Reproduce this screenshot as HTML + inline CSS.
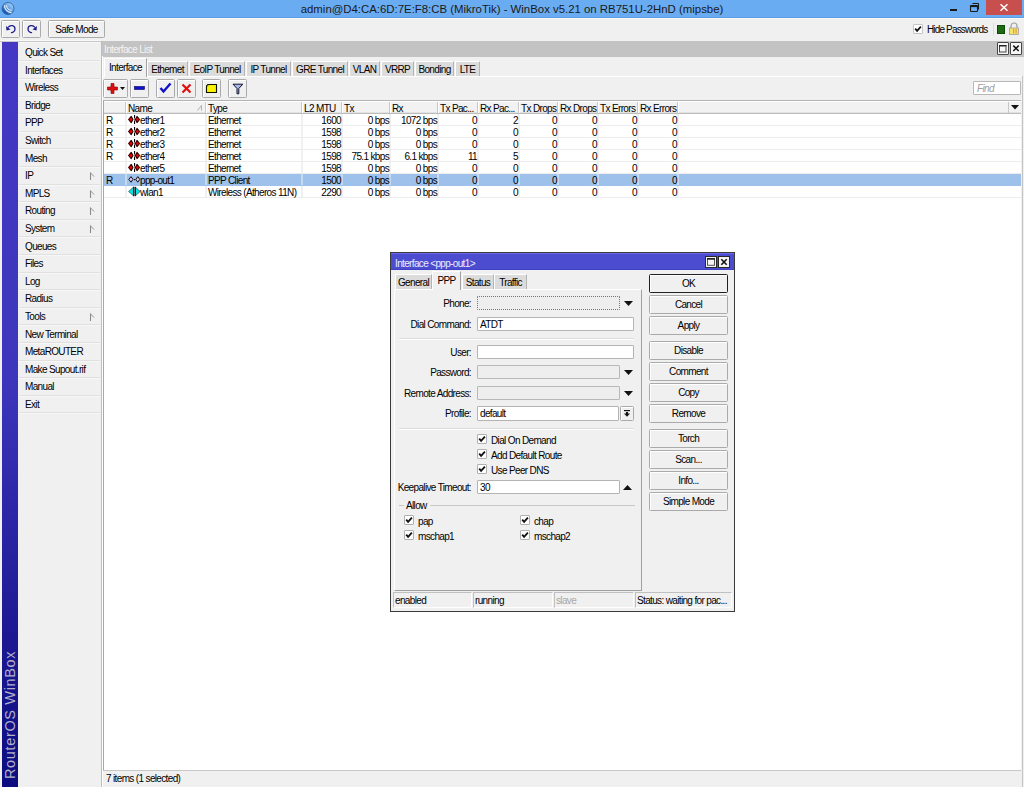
<!DOCTYPE html><html><head><meta charset="utf-8"><style>
*{margin:0;padding:0;box-sizing:border-box}
html,body{width:1024px;height:787px;overflow:hidden;background:#f0f0f0;position:relative;font-family:"Liberation Sans",sans-serif}
.t{position:absolute;font-size:10px;line-height:12px;letter-spacing:-0.65px;color:#000;white-space:pre;padding-top:1px}
.tr{position:absolute;font-size:10px;line-height:12px;letter-spacing:-0.65px;color:#000;white-space:pre;padding-top:1px;text-align:right}
.tc{position:absolute;font-size:10px;line-height:12px;letter-spacing:-0.65px;color:#000;white-space:pre;padding-top:1px;text-align:center}
.btn{position:absolute;border:1px solid #aaaaaa;border-radius:1.5px;background:#f0f0f0;box-shadow:inset 1px 1px 0 #fff}
.inp{position:absolute;border:1px solid #b4b4b4;background:#fff;border-radius:1px}
.cb{position:absolute;width:10px;height:10px;border:1px solid #b0b0b0;background:#fff;border-radius:1px}
</style></head><body>
<div style="position:absolute;left:0px;top:0px;width:1024px;height:17px;background:#6aacf1"></div>
<div style="position:absolute;left:0px;top:17px;width:1024px;height:1px;background:#5b9de6"></div>
<svg style="position:absolute;left:0px;top:0px" width="17" height="17" viewBox="0 0 17 17"><defs><linearGradient id="ig" x1="0.8" y1="0.1" x2="0.2" y2="0.9"><stop offset="0" stop-color="#a8d0f8"/><stop offset="0.5" stop-color="#5a9ae0"/><stop offset="1" stop-color="#0c4aa8"/></linearGradient></defs><circle cx="8" cy="8.5" r="6" fill="url(#ig)" stroke="#2a5a9a" stroke-width="0.8"/><path d="M4.6 5.2 A7 7 0 0 0 11.5 12.6" stroke="#f4f8ff" stroke-width="1.1" fill="none"/><path d="M6.6 5.4 A5.2 5.2 0 0 0 11.6 10.3" stroke="#f4f8ff" stroke-width="1" fill="none"/></svg>
<div style="position:absolute;left:0;top:0;width:1024px;height:18px;text-align:center;font-size:11.4px;line-height:18px;color:#1a1a1a;letter-spacing:0px;white-space:pre">admin@D4:CA:6D:7E:F8:CB (MikroTik) - WinBox v5.21 on RB751U-2HnD (mipsbe)</div>
<div style="position:absolute;left:950px;top:9px;width:7px;height:2px;background:#1a1a1a"></div>
<svg style="position:absolute;left:969px;top:2px" width="12" height="11" viewBox="0 0 12 11"><rect x="1.5" y="3.5" width="7" height="6" rx="0.8" fill="none" stroke="#1a1a1a" stroke-width="1.1"/><rect x="1.5" y="3.5" width="7" height="1.6" fill="#1a1a1a"/><path d="M3.5 1.5 H9.5 V7.5" fill="none" stroke="#1a1a1a" stroke-width="1"/></svg>
<div style="position:absolute;left:986px;top:0px;width:36px;height:15px;background:#c7504f"></div>
<svg style="position:absolute;left:1000px;top:4px" width="8" height="7" viewBox="0 0 8 7"><path d="M0.5 0.3 L7.5 6.7 M7.5 0.3 L0.5 6.7" stroke="#fff" stroke-width="1.5"/></svg>
<div style="position:absolute;left:0px;top:18px;width:1024px;height:1px;background:#faf7f2"></div>
<div style="position:absolute;left:0px;top:40px;width:101px;height:1px;background:#f8f8f8"></div>
<div style="position:absolute;left:0px;top:41px;width:101px;height:1px;background:#c8c8c8"></div>
<div class="btn" style="left:1px;top:20px;width:19px;height:18px"></div>
<svg style="position:absolute;left:5px;top:24px" width="12" height="10" viewBox="0 0 12 10"><path d="M3 3.5 C5 0.5 10 1 10 5 C10 8 7 9 6 8.5" fill="none" stroke="#1c1c8c" stroke-width="1.3"/><path d="M1 2 L1.5 6.5 L5.5 5.5 Z" fill="#1c1c8c"/></svg>
<div class="btn" style="left:22px;top:20px;width:19px;height:18px"></div>
<svg style="position:absolute;left:26px;top:24px" width="12" height="10" viewBox="0 0 12 10"><path d="M9 3.5 C7 0.5 2 1 2 5 C2 8 5 9 6 8.5" fill="none" stroke="#1c1c8c" stroke-width="1.3"/><path d="M11 2 L10.5 6.5 L6.5 5.5 Z" fill="#1c1c8c"/></svg>
<div class="btn" style="left:48px;top:20px;width:57px;height:18px"></div>
<div class="tc" style="left:48px;top:23px;width:57px;">Safe Mode</div>
<div class="cb" style="left:913px;top:24px;width:10px;height:10px;border-color:#c4c4c4"></div>
<svg style="position:absolute;left:913px;top:24px" width="10" height="10" viewBox="0 0 10 10"><path d="M2.2 4.6 L4.1 6.9 L7.9 2.6" fill="none" stroke="#111" stroke-width="1.7"/></svg>
<div class="t" style="left:927px;top:23px;letter-spacing:-0.85px">Hide Passwords</div>
<div style="position:absolute;left:993px;top:23px;width:1px;height:12px;background:#dcdcdc"></div>
<div style="position:absolute;left:997px;top:25px;width:8px;height:9px;background:#1e6a12;border:1px solid #0d4a08"></div>
<svg style="position:absolute;left:1008px;top:22px" width="12" height="13" viewBox="0 0 12 13"><path d="M3 6 V4 A3 3 0 0 1 9 4 V6" fill="none" stroke="#a0a0a0" stroke-width="1.2"/><rect x="1.5" y="6" width="9" height="6.5" fill="#f6e36a" stroke="#a0a0a0" stroke-width="0.8"/><rect x="5" y="7" width="1.2" height="4.5" fill="#e0a040"/><rect x="7.5" y="7" width="1.2" height="4.5" fill="#e0a040"/></svg>
<div style="position:absolute;left:2px;top:42px;width:16px;height:745px;background:linear-gradient(#4438c4,#3d36bc 45%,#1c1892 80%,#0c0c80)"></div>
<div style="position:absolute;left:2px;top:787px;width:170px;height:16px;transform-origin:0 0;transform:rotate(-90deg);font-size:14.5px;line-height:16px;color:#b0b0c8;padding-left:8px;letter-spacing:0.65px;white-space:pre">RouterOS WinBox</div>
<div style="position:absolute;left:19px;top:42px;width:82px;height:745px;background:#f0f0f0"></div>
<div style="position:absolute;left:19px;top:42px;width:81px;height:1px;background:#f8f8f8"></div>
<div style="position:absolute;left:101px;top:41px;width:1px;height:746px;background:#bdbdbd"></div>
<div class="t" style="left:25px;top:46px;">Quick Set</div>
<div style="position:absolute;left:19px;top:60px;width:81px;height:1px;background:#e0e0e0"></div>
<div style="position:absolute;left:19px;top:61px;width:81px;height:1px;background:#f7f7f7"></div>
<div class="t" style="left:25px;top:64px;">Interfaces</div>
<div style="position:absolute;left:19px;top:78px;width:81px;height:1px;background:#e0e0e0"></div>
<div style="position:absolute;left:19px;top:79px;width:81px;height:1px;background:#f7f7f7"></div>
<div class="t" style="left:25px;top:81px;">Wireless</div>
<div style="position:absolute;left:19px;top:96px;width:81px;height:1px;background:#e0e0e0"></div>
<div style="position:absolute;left:19px;top:97px;width:81px;height:1px;background:#f7f7f7"></div>
<div class="t" style="left:25px;top:99px;">Bridge</div>
<div style="position:absolute;left:19px;top:113px;width:81px;height:1px;background:#e0e0e0"></div>
<div style="position:absolute;left:19px;top:114px;width:81px;height:1px;background:#f7f7f7"></div>
<div class="t" style="left:25px;top:116px;">PPP</div>
<div style="position:absolute;left:19px;top:131px;width:81px;height:1px;background:#e0e0e0"></div>
<div style="position:absolute;left:19px;top:132px;width:81px;height:1px;background:#f7f7f7"></div>
<div class="t" style="left:25px;top:134px;">Switch</div>
<div style="position:absolute;left:19px;top:148px;width:81px;height:1px;background:#e0e0e0"></div>
<div style="position:absolute;left:19px;top:149px;width:81px;height:1px;background:#f7f7f7"></div>
<div class="t" style="left:25px;top:152px;">Mesh</div>
<div style="position:absolute;left:19px;top:166px;width:81px;height:1px;background:#e0e0e0"></div>
<div style="position:absolute;left:19px;top:167px;width:81px;height:1px;background:#f7f7f7"></div>
<div class="t" style="left:25px;top:169px;">IP</div>
<div style="position:absolute;left:19px;top:184px;width:81px;height:1px;background:#e0e0e0"></div>
<div style="position:absolute;left:19px;top:185px;width:81px;height:1px;background:#f7f7f7"></div>
<svg style="position:absolute;left:89px;top:172px" width="6" height="9" viewBox="0 0 6 9"><path d="M1.5 0.5 V8" stroke="#8c8c8c" stroke-width="1.1" fill="none"/><path d="M1.5 0.8 L5 4.5" stroke="#8c8c8c" stroke-width="0.9" fill="none"/></svg>
<div class="t" style="left:25px;top:187px;">MPLS</div>
<div style="position:absolute;left:19px;top:201px;width:81px;height:1px;background:#e0e0e0"></div>
<div style="position:absolute;left:19px;top:202px;width:81px;height:1px;background:#f7f7f7"></div>
<svg style="position:absolute;left:89px;top:190px" width="6" height="9" viewBox="0 0 6 9"><path d="M1.5 0.5 V8" stroke="#8c8c8c" stroke-width="1.1" fill="none"/><path d="M1.5 0.8 L5 4.5" stroke="#8c8c8c" stroke-width="0.9" fill="none"/></svg>
<div class="t" style="left:25px;top:204px;">Routing</div>
<div style="position:absolute;left:19px;top:219px;width:81px;height:1px;background:#e0e0e0"></div>
<div style="position:absolute;left:19px;top:220px;width:81px;height:1px;background:#f7f7f7"></div>
<svg style="position:absolute;left:89px;top:207px" width="6" height="9" viewBox="0 0 6 9"><path d="M1.5 0.5 V8" stroke="#8c8c8c" stroke-width="1.1" fill="none"/><path d="M1.5 0.8 L5 4.5" stroke="#8c8c8c" stroke-width="0.9" fill="none"/></svg>
<div class="t" style="left:25px;top:222px;">System</div>
<div style="position:absolute;left:19px;top:236px;width:81px;height:1px;background:#e0e0e0"></div>
<div style="position:absolute;left:19px;top:237px;width:81px;height:1px;background:#f7f7f7"></div>
<svg style="position:absolute;left:89px;top:225px" width="6" height="9" viewBox="0 0 6 9"><path d="M1.5 0.5 V8" stroke="#8c8c8c" stroke-width="1.1" fill="none"/><path d="M1.5 0.8 L5 4.5" stroke="#8c8c8c" stroke-width="0.9" fill="none"/></svg>
<div class="t" style="left:25px;top:240px;">Queues</div>
<div style="position:absolute;left:19px;top:254px;width:81px;height:1px;background:#e0e0e0"></div>
<div style="position:absolute;left:19px;top:255px;width:81px;height:1px;background:#f7f7f7"></div>
<div class="t" style="left:25px;top:257px;">Files</div>
<div style="position:absolute;left:19px;top:272px;width:81px;height:1px;background:#e0e0e0"></div>
<div style="position:absolute;left:19px;top:273px;width:81px;height:1px;background:#f7f7f7"></div>
<div class="t" style="left:25px;top:275px;">Log</div>
<div style="position:absolute;left:19px;top:289px;width:81px;height:1px;background:#e0e0e0"></div>
<div style="position:absolute;left:19px;top:290px;width:81px;height:1px;background:#f7f7f7"></div>
<div class="t" style="left:25px;top:292px;">Radius</div>
<div style="position:absolute;left:19px;top:307px;width:81px;height:1px;background:#e0e0e0"></div>
<div style="position:absolute;left:19px;top:308px;width:81px;height:1px;background:#f7f7f7"></div>
<div class="t" style="left:25px;top:310px;">Tools</div>
<div style="position:absolute;left:19px;top:324px;width:81px;height:1px;background:#e0e0e0"></div>
<div style="position:absolute;left:19px;top:325px;width:81px;height:1px;background:#f7f7f7"></div>
<svg style="position:absolute;left:89px;top:313px" width="6" height="9" viewBox="0 0 6 9"><path d="M1.5 0.5 V8" stroke="#8c8c8c" stroke-width="1.1" fill="none"/><path d="M1.5 0.8 L5 4.5" stroke="#8c8c8c" stroke-width="0.9" fill="none"/></svg>
<div class="t" style="left:25px;top:328px;">New Terminal</div>
<div style="position:absolute;left:19px;top:342px;width:81px;height:1px;background:#e0e0e0"></div>
<div style="position:absolute;left:19px;top:343px;width:81px;height:1px;background:#f7f7f7"></div>
<div class="t" style="left:25px;top:345px;">MetaROUTER</div>
<div style="position:absolute;left:19px;top:360px;width:81px;height:1px;background:#e0e0e0"></div>
<div style="position:absolute;left:19px;top:361px;width:81px;height:1px;background:#f7f7f7"></div>
<div class="t" style="left:25px;top:363px;">Make Supout.rif</div>
<div style="position:absolute;left:19px;top:377px;width:81px;height:1px;background:#e0e0e0"></div>
<div style="position:absolute;left:19px;top:378px;width:81px;height:1px;background:#f7f7f7"></div>
<div class="t" style="left:25px;top:380px;">Manual</div>
<div style="position:absolute;left:19px;top:395px;width:81px;height:1px;background:#e0e0e0"></div>
<div style="position:absolute;left:19px;top:396px;width:81px;height:1px;background:#f7f7f7"></div>
<div class="t" style="left:25px;top:398px;">Exit</div>
<div style="position:absolute;left:19px;top:412px;width:81px;height:1px;background:#e0e0e0"></div>
<div style="position:absolute;left:19px;top:413px;width:81px;height:1px;background:#f7f7f7"></div>
<div style="position:absolute;left:102px;top:41px;width:922px;height:16px;background:#c3c3c3"></div>
<div class="t" style="left:104px;top:43px;color:#f4f4f4;">Interface List</div>
<div style="position:absolute;left:997px;top:42px;width:12px;height:13px;border:1px solid #454545;border-radius:1px;background:#f6f6f6"></div>
<svg style="position:absolute;left:997px;top:42px" width="12" height="13" viewBox="0 0 12 13"><rect x="2.5" y="3.5" width="6.5" height="6.5" fill="none" stroke="#444" stroke-width="1"/><rect x="2" y="3" width="7.5" height="1.5" fill="#222"/><rect x="8.6" y="4" width="1" height="6" fill="#999"/></svg>
<div style="position:absolute;left:1010px;top:42px;width:12px;height:13px;border:1px solid #454545;border-radius:1px;background:#f6f6f6"></div>
<svg style="position:absolute;left:1010px;top:42px" width="12" height="13" viewBox="0 0 12 13"><path d="M3.3 3.6 L8.7 9 M8.7 3.6 L3.3 9" stroke="#111" stroke-width="1.5"/></svg>
<div style="position:absolute;left:102px;top:56px;width:1px;height:731px;background:#ffffff"></div>
<div style="position:absolute;left:103px;top:76px;width:918px;height:1px;background:#ffffff"></div>
<div style="position:absolute;left:1022px;top:76px;width:1px;height:711px;background:#c4c4c4"></div>
<div style="position:absolute;left:104px;top:58px;width:43px;height:19px;background:#f0f0f0;border-left:1px solid #fff;border-top:1px solid #fff;border-right:1px solid #a0a0a0"></div>
<div class="tc" style="left:104px;top:61px;width:43px;">Interface</div>
<div style="position:absolute;left:147px;top:61px;width:41px;height:15px;background:#dcdcdc;border-left:1px solid #fff;border-top:1px solid #fff;border-right:1px solid #b4b4b4"></div>
<div class="tc" style="left:147px;top:63px;width:41px;">Ethemet</div>
<div style="position:absolute;left:189px;top:61px;width:56px;height:15px;background:#dcdcdc;border-left:1px solid #fff;border-top:1px solid #fff;border-right:1px solid #b4b4b4"></div>
<div class="tc" style="left:189px;top:63px;width:56px;">EoIP Tunnel</div>
<div style="position:absolute;left:246px;top:61px;width:45px;height:15px;background:#dcdcdc;border-left:1px solid #fff;border-top:1px solid #fff;border-right:1px solid #b4b4b4"></div>
<div class="tc" style="left:246px;top:63px;width:45px;">IP Tunnel</div>
<div style="position:absolute;left:292px;top:61px;width:56px;height:15px;background:#dcdcdc;border-left:1px solid #fff;border-top:1px solid #fff;border-right:1px solid #b4b4b4"></div>
<div class="tc" style="left:292px;top:63px;width:56px;">GRE Tunnel</div>
<div style="position:absolute;left:349px;top:61px;width:31px;height:15px;background:#dcdcdc;border-left:1px solid #fff;border-top:1px solid #fff;border-right:1px solid #b4b4b4"></div>
<div class="tc" style="left:349px;top:63px;width:31px;">VLAN</div>
<div style="position:absolute;left:381px;top:61px;width:33px;height:15px;background:#dcdcdc;border-left:1px solid #fff;border-top:1px solid #fff;border-right:1px solid #b4b4b4"></div>
<div class="tc" style="left:381px;top:63px;width:33px;">VRRP</div>
<div style="position:absolute;left:415px;top:61px;width:39px;height:15px;background:#dcdcdc;border-left:1px solid #fff;border-top:1px solid #fff;border-right:1px solid #b4b4b4"></div>
<div class="tc" style="left:415px;top:63px;width:39px;">Bonding</div>
<div style="position:absolute;left:455px;top:61px;width:25px;height:15px;background:#dcdcdc;border-left:1px solid #fff;border-top:1px solid #fff;border-right:1px solid #b4b4b4"></div>
<div class="tc" style="left:455px;top:63px;width:25px;">LTE</div>
<div class="btn" style="left:103px;top:79px;width:25px;height:19px"></div>
<div class="btn" style="left:130px;top:79px;width:19px;height:19px"></div>
<div class="btn" style="left:156px;top:79px;width:19px;height:19px"></div>
<div class="btn" style="left:177px;top:79px;width:19px;height:19px"></div>
<div class="btn" style="left:202px;top:79px;width:19px;height:19px"></div>
<div class="btn" style="left:228px;top:79px;width:19px;height:19px"></div>
<svg style="position:absolute;left:107px;top:82px" width="20" height="13" viewBox="0 0 20 13"><path d="M4 1.5 H7 V5 H10.5 V8 H7 V11.5 H4 V8 H0.5 V5 H4 Z" fill="#e01010" stroke="#800000" stroke-width="0.6"/><path d="M13 5 H18 L15.5 8 Z" fill="#111"/></svg>
<svg style="position:absolute;left:134px;top:83px" width="12" height="10" viewBox="0 0 12 10"><rect x="0.5" y="3.5" width="10" height="3" fill="#1010d0" stroke="#000060" stroke-width="0.6"/></svg>
<svg style="position:absolute;left:159px;top:82px" width="13" height="12" viewBox="0 0 13 12"><path d="M1.5 6 L4.5 9.5 L11.5 1.5" fill="none" stroke="#1010c8" stroke-width="2.4"/></svg>
<svg style="position:absolute;left:181px;top:83px" width="11" height="11" viewBox="0 0 11 11"><path d="M1.5 1.5 L9.5 9.5 M9.5 1.5 L1.5 9.5" stroke="#e01010" stroke-width="2.2"/></svg>
<svg style="position:absolute;left:205px;top:83px" width="13" height="11" viewBox="0 0 13 11"><path d="M1.5 3 L3 1.5 H11.5 V9.5 H1.5 Z" fill="#f8f400" stroke="#101000" stroke-width="1.1" stroke-linejoin="round"/><path d="M1.6 3 H3.2 V1.5" fill="none" stroke="#777" stroke-width="0.6"/></svg>
<svg style="position:absolute;left:232px;top:83px" width="12" height="12" viewBox="0 0 12 12"><path d="M1 1.2 H10.8 L6.8 5.5 V10.8 H5 V5.5 Z" fill="#a8b8e8" stroke="#101028" stroke-width="1" stroke-linejoin="round"/></svg>
<div class="inp" style="left:973px;top:81px;width:48px;height:14px;border-color:#b8b8b8"></div>
<div class="t" style="left:977px;top:82px;color:#a0a0a0;font-style:italic">Find</div>
<div style="position:absolute;left:103px;top:100px;width:918px;height:670px;background:#fff"></div>
<div style="position:absolute;left:103px;top:100px;width:1px;height:670px;background:#a8a8a8"></div>
<div style="position:absolute;left:104px;top:100px;width:917px;height:1px;background:#b4b4b4"></div>
<div style="position:absolute;left:104px;top:101px;width:917px;height:1px;background:#ffffff"></div>
<div style="position:absolute;left:104px;top:102px;width:917px;height:11px;background:#f2f2f2"></div>
<div style="position:absolute;left:104px;top:112px;width:917px;height:1px;background:#e2e2e2"></div>
<div style="position:absolute;left:104px;top:113px;width:917px;height:1px;background:#bcbcbc"></div>
<div style="position:absolute;left:125px;top:102px;width:1px;height:11px;background:#c8c8c8"></div>
<div style="position:absolute;left:126px;top:102px;width:1px;height:11px;background:#ffffff"></div>
<div style="position:absolute;left:205px;top:102px;width:1px;height:11px;background:#c8c8c8"></div>
<div style="position:absolute;left:206px;top:102px;width:1px;height:11px;background:#ffffff"></div>
<div class="t" style="left:128px;top:102px;">Name</div>
<div style="position:absolute;left:301px;top:102px;width:1px;height:11px;background:#c8c8c8"></div>
<div style="position:absolute;left:302px;top:102px;width:1px;height:11px;background:#ffffff"></div>
<div class="t" style="left:208px;top:102px;">Type</div>
<div style="position:absolute;left:341px;top:102px;width:1px;height:11px;background:#c8c8c8"></div>
<div style="position:absolute;left:342px;top:102px;width:1px;height:11px;background:#ffffff"></div>
<div class="t" style="left:304px;top:102px;">L2 MTU</div>
<div style="position:absolute;left:389px;top:102px;width:1px;height:11px;background:#c8c8c8"></div>
<div style="position:absolute;left:390px;top:102px;width:1px;height:11px;background:#ffffff"></div>
<div class="t" style="left:344px;top:102px;">Tx</div>
<div style="position:absolute;left:437px;top:102px;width:1px;height:11px;background:#c8c8c8"></div>
<div style="position:absolute;left:438px;top:102px;width:1px;height:11px;background:#ffffff"></div>
<div class="t" style="left:392px;top:102px;">Rx</div>
<div style="position:absolute;left:477px;top:102px;width:1px;height:11px;background:#c8c8c8"></div>
<div style="position:absolute;left:478px;top:102px;width:1px;height:11px;background:#ffffff"></div>
<div class="t" style="left:440px;top:102px;">Tx Pac...</div>
<div style="position:absolute;left:518px;top:102px;width:1px;height:11px;background:#c8c8c8"></div>
<div style="position:absolute;left:519px;top:102px;width:1px;height:11px;background:#ffffff"></div>
<div class="t" style="left:480px;top:102px;">Rx Pac...</div>
<div style="position:absolute;left:557px;top:102px;width:1px;height:11px;background:#c8c8c8"></div>
<div style="position:absolute;left:558px;top:102px;width:1px;height:11px;background:#ffffff"></div>
<div class="t" style="left:521px;top:102px;">Tx Drops</div>
<div style="position:absolute;left:597px;top:102px;width:1px;height:11px;background:#c8c8c8"></div>
<div style="position:absolute;left:598px;top:102px;width:1px;height:11px;background:#ffffff"></div>
<div class="t" style="left:560px;top:102px;">Rx Drops</div>
<div style="position:absolute;left:637px;top:102px;width:1px;height:11px;background:#c8c8c8"></div>
<div style="position:absolute;left:638px;top:102px;width:1px;height:11px;background:#ffffff"></div>
<div class="t" style="left:600px;top:102px;">Tx Errors</div>
<div style="position:absolute;left:677px;top:102px;width:1px;height:11px;background:#c8c8c8"></div>
<div style="position:absolute;left:678px;top:102px;width:1px;height:11px;background:#ffffff"></div>
<div class="t" style="left:640px;top:102px;">Rx Errors</div>
<svg style="position:absolute;left:197px;top:105px" width="6" height="6" viewBox="0 0 6 6"><path d="M0.5 5.5 L4.5 0.5 M4.5 0.5 V5.5" fill="none" stroke="#a8a8a8" stroke-width="0.9"/></svg>
<div style="position:absolute;left:1008px;top:102px;width:1px;height:11px;background:#c8c8c8"></div>
<svg style="position:absolute;left:1011px;top:105px" width="8" height="5" viewBox="0 0 8 5"><path d="M0 0 H8 L4 4.6 Z" fill="#111"/></svg>
<div style="position:absolute;left:104px;top:125px;width:917px;height:1px;background:#ececec"></div>
<div style="position:absolute;left:125px;top:114px;width:2px;height:11px;background:#f0f0f0"></div>
<div style="position:absolute;left:205px;top:114px;width:2px;height:11px;background:#f0f0f0"></div>
<div style="position:absolute;left:301px;top:114px;width:2px;height:11px;background:#f0f0f0"></div>
<div style="position:absolute;left:341px;top:114px;width:2px;height:11px;background:#f0f0f0"></div>
<div style="position:absolute;left:389px;top:114px;width:2px;height:11px;background:#f0f0f0"></div>
<div style="position:absolute;left:437px;top:114px;width:2px;height:11px;background:#f0f0f0"></div>
<div style="position:absolute;left:477px;top:114px;width:2px;height:11px;background:#f0f0f0"></div>
<div style="position:absolute;left:518px;top:114px;width:2px;height:11px;background:#f0f0f0"></div>
<div style="position:absolute;left:557px;top:114px;width:2px;height:11px;background:#f0f0f0"></div>
<div style="position:absolute;left:597px;top:114px;width:2px;height:11px;background:#f0f0f0"></div>
<div style="position:absolute;left:637px;top:114px;width:2px;height:11px;background:#f0f0f0"></div>
<div style="position:absolute;left:677px;top:114px;width:2px;height:11px;background:#f0f0f0"></div>
<div class="t" style="left:106px;top:114px;">R</div>
<div class="t" style="left:140px;top:114px;">ether1</div>
<div class="t" style="left:208px;top:114px;">Ethernet</div>
<div class="tr" style="left:302px;top:114px;width:39px">1600</div>
<div class="tr" style="left:342px;top:114px;width:47px">0 bps</div>
<div class="tr" style="left:390px;top:114px;width:47px">1072 bps</div>
<div class="tr" style="left:438px;top:114px;width:39px">0</div>
<div class="tr" style="left:478px;top:114px;width:40px">2</div>
<div class="tr" style="left:519px;top:114px;width:38px">0</div>
<div class="tr" style="left:558px;top:114px;width:39px">0</div>
<div class="tr" style="left:598px;top:114px;width:39px">0</div>
<div class="tr" style="left:638px;top:114px;width:39px">0</div>
<svg style="position:absolute;left:128px;top:114px" width="13" height="11" viewBox="0 0 13 11"><path d="M0.6 5.5 L3.2 2.4 L5 5.5 L3.2 8.6 Z" fill="#f00000" stroke="#300000" stroke-width="1.1" stroke-linejoin="round"/><path d="M11.6 5.5 L9 2.4 L7.4 5.5 L9 8.6 Z" fill="#f00000" stroke="#300000" stroke-width="1.1" stroke-linejoin="round"/><rect x="6" y="1" width="1.1" height="3.5" fill="#000"/><rect x="6" y="6.5" width="1.1" height="3.5" fill="#000"/><rect x="6" y="5" width="1" height="1" fill="#888"/></svg>
<div style="position:absolute;left:104px;top:137px;width:917px;height:1px;background:#ececec"></div>
<div style="position:absolute;left:125px;top:126px;width:2px;height:11px;background:#f0f0f0"></div>
<div style="position:absolute;left:205px;top:126px;width:2px;height:11px;background:#f0f0f0"></div>
<div style="position:absolute;left:301px;top:126px;width:2px;height:11px;background:#f0f0f0"></div>
<div style="position:absolute;left:341px;top:126px;width:2px;height:11px;background:#f0f0f0"></div>
<div style="position:absolute;left:389px;top:126px;width:2px;height:11px;background:#f0f0f0"></div>
<div style="position:absolute;left:437px;top:126px;width:2px;height:11px;background:#f0f0f0"></div>
<div style="position:absolute;left:477px;top:126px;width:2px;height:11px;background:#f0f0f0"></div>
<div style="position:absolute;left:518px;top:126px;width:2px;height:11px;background:#f0f0f0"></div>
<div style="position:absolute;left:557px;top:126px;width:2px;height:11px;background:#f0f0f0"></div>
<div style="position:absolute;left:597px;top:126px;width:2px;height:11px;background:#f0f0f0"></div>
<div style="position:absolute;left:637px;top:126px;width:2px;height:11px;background:#f0f0f0"></div>
<div style="position:absolute;left:677px;top:126px;width:2px;height:11px;background:#f0f0f0"></div>
<div class="t" style="left:106px;top:126px;">R</div>
<div class="t" style="left:140px;top:126px;">ether2</div>
<div class="t" style="left:208px;top:126px;">Ethernet</div>
<div class="tr" style="left:302px;top:126px;width:39px">1598</div>
<div class="tr" style="left:342px;top:126px;width:47px">0 bps</div>
<div class="tr" style="left:390px;top:126px;width:47px">0 bps</div>
<div class="tr" style="left:438px;top:126px;width:39px">0</div>
<div class="tr" style="left:478px;top:126px;width:40px">0</div>
<div class="tr" style="left:519px;top:126px;width:38px">0</div>
<div class="tr" style="left:558px;top:126px;width:39px">0</div>
<div class="tr" style="left:598px;top:126px;width:39px">0</div>
<div class="tr" style="left:638px;top:126px;width:39px">0</div>
<svg style="position:absolute;left:128px;top:126px" width="13" height="11" viewBox="0 0 13 11"><path d="M0.6 5.5 L3.2 2.4 L5 5.5 L3.2 8.6 Z" fill="#f00000" stroke="#300000" stroke-width="1.1" stroke-linejoin="round"/><path d="M11.6 5.5 L9 2.4 L7.4 5.5 L9 8.6 Z" fill="#f00000" stroke="#300000" stroke-width="1.1" stroke-linejoin="round"/><rect x="6" y="1" width="1.1" height="3.5" fill="#000"/><rect x="6" y="6.5" width="1.1" height="3.5" fill="#000"/><rect x="6" y="5" width="1" height="1" fill="#888"/></svg>
<div style="position:absolute;left:104px;top:149px;width:917px;height:1px;background:#ececec"></div>
<div style="position:absolute;left:125px;top:138px;width:2px;height:11px;background:#f0f0f0"></div>
<div style="position:absolute;left:205px;top:138px;width:2px;height:11px;background:#f0f0f0"></div>
<div style="position:absolute;left:301px;top:138px;width:2px;height:11px;background:#f0f0f0"></div>
<div style="position:absolute;left:341px;top:138px;width:2px;height:11px;background:#f0f0f0"></div>
<div style="position:absolute;left:389px;top:138px;width:2px;height:11px;background:#f0f0f0"></div>
<div style="position:absolute;left:437px;top:138px;width:2px;height:11px;background:#f0f0f0"></div>
<div style="position:absolute;left:477px;top:138px;width:2px;height:11px;background:#f0f0f0"></div>
<div style="position:absolute;left:518px;top:138px;width:2px;height:11px;background:#f0f0f0"></div>
<div style="position:absolute;left:557px;top:138px;width:2px;height:11px;background:#f0f0f0"></div>
<div style="position:absolute;left:597px;top:138px;width:2px;height:11px;background:#f0f0f0"></div>
<div style="position:absolute;left:637px;top:138px;width:2px;height:11px;background:#f0f0f0"></div>
<div style="position:absolute;left:677px;top:138px;width:2px;height:11px;background:#f0f0f0"></div>
<div class="t" style="left:106px;top:138px;">R</div>
<div class="t" style="left:140px;top:138px;">ether3</div>
<div class="t" style="left:208px;top:138px;">Ethernet</div>
<div class="tr" style="left:302px;top:138px;width:39px">1598</div>
<div class="tr" style="left:342px;top:138px;width:47px">0 bps</div>
<div class="tr" style="left:390px;top:138px;width:47px">0 bps</div>
<div class="tr" style="left:438px;top:138px;width:39px">0</div>
<div class="tr" style="left:478px;top:138px;width:40px">0</div>
<div class="tr" style="left:519px;top:138px;width:38px">0</div>
<div class="tr" style="left:558px;top:138px;width:39px">0</div>
<div class="tr" style="left:598px;top:138px;width:39px">0</div>
<div class="tr" style="left:638px;top:138px;width:39px">0</div>
<svg style="position:absolute;left:128px;top:138px" width="13" height="11" viewBox="0 0 13 11"><path d="M0.6 5.5 L3.2 2.4 L5 5.5 L3.2 8.6 Z" fill="#f00000" stroke="#300000" stroke-width="1.1" stroke-linejoin="round"/><path d="M11.6 5.5 L9 2.4 L7.4 5.5 L9 8.6 Z" fill="#f00000" stroke="#300000" stroke-width="1.1" stroke-linejoin="round"/><rect x="6" y="1" width="1.1" height="3.5" fill="#000"/><rect x="6" y="6.5" width="1.1" height="3.5" fill="#000"/><rect x="6" y="5" width="1" height="1" fill="#888"/></svg>
<div style="position:absolute;left:104px;top:161px;width:917px;height:1px;background:#ececec"></div>
<div style="position:absolute;left:125px;top:150px;width:2px;height:11px;background:#f0f0f0"></div>
<div style="position:absolute;left:205px;top:150px;width:2px;height:11px;background:#f0f0f0"></div>
<div style="position:absolute;left:301px;top:150px;width:2px;height:11px;background:#f0f0f0"></div>
<div style="position:absolute;left:341px;top:150px;width:2px;height:11px;background:#f0f0f0"></div>
<div style="position:absolute;left:389px;top:150px;width:2px;height:11px;background:#f0f0f0"></div>
<div style="position:absolute;left:437px;top:150px;width:2px;height:11px;background:#f0f0f0"></div>
<div style="position:absolute;left:477px;top:150px;width:2px;height:11px;background:#f0f0f0"></div>
<div style="position:absolute;left:518px;top:150px;width:2px;height:11px;background:#f0f0f0"></div>
<div style="position:absolute;left:557px;top:150px;width:2px;height:11px;background:#f0f0f0"></div>
<div style="position:absolute;left:597px;top:150px;width:2px;height:11px;background:#f0f0f0"></div>
<div style="position:absolute;left:637px;top:150px;width:2px;height:11px;background:#f0f0f0"></div>
<div style="position:absolute;left:677px;top:150px;width:2px;height:11px;background:#f0f0f0"></div>
<div class="t" style="left:106px;top:150px;">R</div>
<div class="t" style="left:140px;top:150px;">ether4</div>
<div class="t" style="left:208px;top:150px;">Ethernet</div>
<div class="tr" style="left:302px;top:150px;width:39px">1598</div>
<div class="tr" style="left:342px;top:150px;width:47px">75.1 kbps</div>
<div class="tr" style="left:390px;top:150px;width:47px">6.1 kbps</div>
<div class="tr" style="left:438px;top:150px;width:39px">11</div>
<div class="tr" style="left:478px;top:150px;width:40px">5</div>
<div class="tr" style="left:519px;top:150px;width:38px">0</div>
<div class="tr" style="left:558px;top:150px;width:39px">0</div>
<div class="tr" style="left:598px;top:150px;width:39px">0</div>
<div class="tr" style="left:638px;top:150px;width:39px">0</div>
<svg style="position:absolute;left:128px;top:150px" width="13" height="11" viewBox="0 0 13 11"><path d="M0.6 5.5 L3.2 2.4 L5 5.5 L3.2 8.6 Z" fill="#f00000" stroke="#300000" stroke-width="1.1" stroke-linejoin="round"/><path d="M11.6 5.5 L9 2.4 L7.4 5.5 L9 8.6 Z" fill="#f00000" stroke="#300000" stroke-width="1.1" stroke-linejoin="round"/><rect x="6" y="1" width="1.1" height="3.5" fill="#000"/><rect x="6" y="6.5" width="1.1" height="3.5" fill="#000"/><rect x="6" y="5" width="1" height="1" fill="#888"/></svg>
<div style="position:absolute;left:104px;top:173px;width:917px;height:1px;background:#ececec"></div>
<div style="position:absolute;left:125px;top:162px;width:2px;height:11px;background:#f0f0f0"></div>
<div style="position:absolute;left:205px;top:162px;width:2px;height:11px;background:#f0f0f0"></div>
<div style="position:absolute;left:301px;top:162px;width:2px;height:11px;background:#f0f0f0"></div>
<div style="position:absolute;left:341px;top:162px;width:2px;height:11px;background:#f0f0f0"></div>
<div style="position:absolute;left:389px;top:162px;width:2px;height:11px;background:#f0f0f0"></div>
<div style="position:absolute;left:437px;top:162px;width:2px;height:11px;background:#f0f0f0"></div>
<div style="position:absolute;left:477px;top:162px;width:2px;height:11px;background:#f0f0f0"></div>
<div style="position:absolute;left:518px;top:162px;width:2px;height:11px;background:#f0f0f0"></div>
<div style="position:absolute;left:557px;top:162px;width:2px;height:11px;background:#f0f0f0"></div>
<div style="position:absolute;left:597px;top:162px;width:2px;height:11px;background:#f0f0f0"></div>
<div style="position:absolute;left:637px;top:162px;width:2px;height:11px;background:#f0f0f0"></div>
<div style="position:absolute;left:677px;top:162px;width:2px;height:11px;background:#f0f0f0"></div>
<div class="t" style="left:106px;top:162px;"></div>
<div class="t" style="left:140px;top:162px;">ether5</div>
<div class="t" style="left:208px;top:162px;">Ethernet</div>
<div class="tr" style="left:302px;top:162px;width:39px">1598</div>
<div class="tr" style="left:342px;top:162px;width:47px">0 bps</div>
<div class="tr" style="left:390px;top:162px;width:47px">0 bps</div>
<div class="tr" style="left:438px;top:162px;width:39px">0</div>
<div class="tr" style="left:478px;top:162px;width:40px">0</div>
<div class="tr" style="left:519px;top:162px;width:38px">0</div>
<div class="tr" style="left:558px;top:162px;width:39px">0</div>
<div class="tr" style="left:598px;top:162px;width:39px">0</div>
<div class="tr" style="left:638px;top:162px;width:39px">0</div>
<svg style="position:absolute;left:128px;top:162px" width="13" height="11" viewBox="0 0 13 11"><path d="M0.6 5.5 L3.2 2.4 L5 5.5 L3.2 8.6 Z" fill="#f00000" stroke="#300000" stroke-width="1.1" stroke-linejoin="round"/><path d="M11.6 5.5 L9 2.4 L7.4 5.5 L9 8.6 Z" fill="#f00000" stroke="#300000" stroke-width="1.1" stroke-linejoin="round"/><rect x="6" y="1" width="1.1" height="3.5" fill="#000"/><rect x="6" y="6.5" width="1.1" height="3.5" fill="#000"/><rect x="6" y="5" width="1" height="1" fill="#888"/></svg>
<div style="position:absolute;left:104px;top:185px;width:917px;height:1px;background:#ececec"></div>
<div style="position:absolute;left:104px;top:174px;width:917px;height:12px;background:#9dc1ea"></div>
<div style="position:absolute;left:125px;top:174px;width:2px;height:11px;background:#ffffff;opacity:.4"></div>
<div style="position:absolute;left:205px;top:174px;width:2px;height:11px;background:#ffffff;opacity:.4"></div>
<div style="position:absolute;left:301px;top:174px;width:2px;height:11px;background:#ffffff;opacity:.4"></div>
<div style="position:absolute;left:341px;top:174px;width:2px;height:11px;background:#ffffff;opacity:.4"></div>
<div style="position:absolute;left:389px;top:174px;width:2px;height:11px;background:#ffffff;opacity:.4"></div>
<div style="position:absolute;left:437px;top:174px;width:2px;height:11px;background:#ffffff;opacity:.4"></div>
<div style="position:absolute;left:477px;top:174px;width:2px;height:11px;background:#ffffff;opacity:.4"></div>
<div style="position:absolute;left:518px;top:174px;width:2px;height:11px;background:#ffffff;opacity:.4"></div>
<div style="position:absolute;left:557px;top:174px;width:2px;height:11px;background:#ffffff;opacity:.4"></div>
<div style="position:absolute;left:597px;top:174px;width:2px;height:11px;background:#ffffff;opacity:.4"></div>
<div style="position:absolute;left:637px;top:174px;width:2px;height:11px;background:#ffffff;opacity:.4"></div>
<div style="position:absolute;left:677px;top:174px;width:2px;height:11px;background:#ffffff;opacity:.4"></div>
<div class="t" style="left:106px;top:174px;">R</div>
<div class="t" style="left:140px;top:174px;">ppp-out1</div>
<div class="t" style="left:208px;top:174px;">PPP Client</div>
<div class="tr" style="left:302px;top:174px;width:39px">1500</div>
<div class="tr" style="left:342px;top:174px;width:47px">0 bps</div>
<div class="tr" style="left:390px;top:174px;width:47px">0 bps</div>
<div class="tr" style="left:438px;top:174px;width:39px">0</div>
<div class="tr" style="left:478px;top:174px;width:40px">0</div>
<div class="tr" style="left:519px;top:174px;width:38px">0</div>
<div class="tr" style="left:558px;top:174px;width:39px">0</div>
<div class="tr" style="left:598px;top:174px;width:39px">0</div>
<div class="tr" style="left:638px;top:174px;width:39px">0</div>
<svg style="position:absolute;left:128px;top:174px" width="13" height="11" viewBox="0 0 13 11"><path d="M0.8 5.4 L3 2.6 L5 5.4 L3 8.2 Z" fill="#d8c4f0" stroke="#101010" stroke-width="1"/><path d="M11.8 5.4 L9.8 2.6 L7.8 5.4 L9.8 8.2 Z" fill="#d8c4f0" stroke="#101010" stroke-width="1"/><rect x="6" y="5" width="1.2" height="1.2" fill="#111"/></svg>
<div style="position:absolute;left:104px;top:197px;width:917px;height:1px;background:#ececec"></div>
<div style="position:absolute;left:125px;top:186px;width:2px;height:11px;background:#f0f0f0"></div>
<div style="position:absolute;left:205px;top:186px;width:2px;height:11px;background:#f0f0f0"></div>
<div style="position:absolute;left:301px;top:186px;width:2px;height:11px;background:#f0f0f0"></div>
<div style="position:absolute;left:341px;top:186px;width:2px;height:11px;background:#f0f0f0"></div>
<div style="position:absolute;left:389px;top:186px;width:2px;height:11px;background:#f0f0f0"></div>
<div style="position:absolute;left:437px;top:186px;width:2px;height:11px;background:#f0f0f0"></div>
<div style="position:absolute;left:477px;top:186px;width:2px;height:11px;background:#f0f0f0"></div>
<div style="position:absolute;left:518px;top:186px;width:2px;height:11px;background:#f0f0f0"></div>
<div style="position:absolute;left:557px;top:186px;width:2px;height:11px;background:#f0f0f0"></div>
<div style="position:absolute;left:597px;top:186px;width:2px;height:11px;background:#f0f0f0"></div>
<div style="position:absolute;left:637px;top:186px;width:2px;height:11px;background:#f0f0f0"></div>
<div style="position:absolute;left:677px;top:186px;width:2px;height:11px;background:#f0f0f0"></div>
<div class="t" style="left:106px;top:186px;"></div>
<div class="t" style="left:140px;top:186px;">wlan1</div>
<div class="t" style="left:208px;top:186px;">Wireless (Atheros 11N)</div>
<div class="tr" style="left:302px;top:186px;width:39px">2290</div>
<div class="tr" style="left:342px;top:186px;width:47px">0 bps</div>
<div class="tr" style="left:390px;top:186px;width:47px">0 bps</div>
<div class="tr" style="left:438px;top:186px;width:39px">0</div>
<div class="tr" style="left:478px;top:186px;width:40px">0</div>
<div class="tr" style="left:519px;top:186px;width:38px">0</div>
<div class="tr" style="left:558px;top:186px;width:39px">0</div>
<div class="tr" style="left:598px;top:186px;width:39px">0</div>
<div class="tr" style="left:638px;top:186px;width:39px">0</div>
<svg style="position:absolute;left:128px;top:186px" width="13" height="11" viewBox="0 0 13 11"><path d="M0.6 5.5 L5.8 0.8 V10.2 Z" fill="#00e4ec" stroke="#303030" stroke-width="0.6"/><path d="M12.2 5.5 L7 0.8 V10.2 Z" fill="#00e4ec" stroke="#303030" stroke-width="0.6"/><rect x="5.2" y="1" width="1" height="9" fill="#111"/><rect x="6.8" y="1" width="1" height="9" fill="#111"/></svg>
<div style="position:absolute;left:103px;top:770px;width:918px;height:17px;background:#f0f0f0;border-top:1px solid #c8c8c8"></div>
<div class="t" style="left:106px;top:772px;">7 items (1 selected)</div>
<div style="position:absolute;left:390px;top:252px;width:345px;height:360px;background:#f0f0f0;border:1px solid #3a3a3a"></div>
<div style="position:absolute;left:391px;top:253px;width:343px;height:17px;background:#4c4cd0"></div>
<div style="position:absolute;left:391px;top:253px;width:343px;height:1px;background:#6a6ae8"></div>
<div style="position:absolute;left:391px;top:269px;width:343px;height:1px;background:#4040c4"></div>
<div class="t" style="left:395px;top:257px;color:#ececff;">Interface &lt;ppp-out1&gt;</div>
<div style="position:absolute;left:705px;top:256px;width:12px;height:12px;border:1px solid #282828;background:#f4f4f4"></div>
<div style="position:absolute;left:718px;top:256px;width:12px;height:12px;border:1px solid #282828;background:#f4f4f4"></div>
<svg style="position:absolute;left:705px;top:256px" width="12" height="12" viewBox="0 0 12 12"><rect x="2.5" y="2.8" width="7" height="6.5" fill="none" stroke="#555" stroke-width="1"/><rect x="2" y="2" width="8" height="1.6" fill="#222"/></svg>
<svg style="position:absolute;left:718px;top:256px" width="12" height="12" viewBox="0 0 12 12"><path d="M3.3 3.3 L8.7 8.7 M8.7 3.3 L3.3 8.7" stroke="#111" stroke-width="1.6"/></svg>
<div style="position:absolute;left:394px;top:289px;width:248px;height:302px;border-left:1px solid #fff;border-top:1px solid #fff;border-right:1px solid #a0a0a0;border-bottom:1px solid #a0a0a0"></div>
<div style="position:absolute;left:395px;top:274px;width:37px;height:15px;background:#dcdcdc;border-left:1px solid #fff;border-top:1px solid #fff;border-right:1px solid #b4b4b4"></div>
<div class="tc" style="left:395px;top:276px;width:37px;">General</div>
<div style="position:absolute;left:432px;top:271px;width:29px;height:19px;background:#f0f0f0;border-left:1px solid #fff;border-top:1px solid #fff;border-right:1px solid #a0a0a0"></div>
<div class="tc" style="left:432px;top:274px;width:29px;">PPP</div>
<div style="position:absolute;left:462px;top:274px;width:32px;height:15px;background:#dcdcdc;border-left:1px solid #fff;border-top:1px solid #fff;border-right:1px solid #b4b4b4"></div>
<div class="tc" style="left:462px;top:276px;width:32px;">Status</div>
<div style="position:absolute;left:494px;top:274px;width:33px;height:15px;background:#dcdcdc;border-left:1px solid #fff;border-top:1px solid #fff;border-right:1px solid #b4b4b4"></div>
<div class="tc" style="left:494px;top:276px;width:33px;">Traffic</div>
<div class="tr" style="left:300px;top:297px;width:171px;">Phone:</div>
<div class="inp" style="left:477px;top:296px;width:143px;height:14px;background:#eeeeee;border:1px dotted #777"></div>
<svg style="position:absolute;left:624px;top:301px" width="9" height="5" viewBox="0 0 9 5"><path d="M0 0 H9 L4.5 5 Z" fill="#111"/></svg>
<div class="tr" style="left:300px;top:318px;width:171px;">Dial Command:</div>
<div class="inp" style="left:477px;top:317px;width:157px;height:14px"></div>
<div class="t" style="left:480px;top:318px;">ATDT</div>
<div style="position:absolute;left:399px;top:338px;width:235px;height:1px;background:#dcdcdc"></div>
<div style="position:absolute;left:399px;top:339px;width:235px;height:1px;background:#ffffff"></div>
<div class="tr" style="left:300px;top:346px;width:171px;">User:</div>
<div class="inp" style="left:477px;top:345px;width:157px;height:14px"></div>
<div class="tr" style="left:300px;top:366px;width:171px;">Password:</div>
<div class="inp" style="left:477px;top:365px;width:143px;height:14px;background:#eeeeee;border-color:#b8b8b8"></div>
<svg style="position:absolute;left:624px;top:370px" width="9" height="5" viewBox="0 0 9 5"><path d="M0 0 H9 L4.5 5 Z" fill="#111"/></svg>
<div class="tr" style="left:300px;top:387px;width:171px;">Remote Address:</div>
<div class="inp" style="left:477px;top:386px;width:143px;height:14px;background:#eeeeee;border-color:#b8b8b8"></div>
<svg style="position:absolute;left:624px;top:391px" width="9" height="5" viewBox="0 0 9 5"><path d="M0 0 H9 L4.5 5 Z" fill="#111"/></svg>
<div class="tr" style="left:300px;top:407px;width:171px;">Profile:</div>
<div class="inp" style="left:477px;top:406px;width:142px;height:15px"></div>
<div class="t" style="left:480px;top:407px;">default</div>
<div class="btn" style="left:620px;top:406px;width:14px;height:15px"></div>
<svg style="position:absolute;left:623px;top:409px" width="8" height="9" viewBox="0 0 8 9"><rect x="1" y="1" width="6" height="1.2" fill="#111"/><rect x="3" y="3" width="2" height="2.5" fill="#111"/><path d="M1 4.5 H7 L4 7.8 Z" fill="#111"/></svg>
<div style="position:absolute;left:399px;top:428px;width:235px;height:1px;background:#dcdcdc"></div>
<div style="position:absolute;left:399px;top:429px;width:235px;height:1px;background:#ffffff"></div>
<div class="cb" style="left:477px;top:434px"></div>
<svg style="position:absolute;left:477px;top:434px" width="10" height="10" viewBox="0 0 10 10"><path d="M2.2 4.6 L4.1 6.9 L7.9 2.6" fill="none" stroke="#111" stroke-width="1.8"/></svg>
<div class="t" style="left:491px;top:434px;">Dial On Demand</div>
<div class="cb" style="left:477px;top:449px"></div>
<svg style="position:absolute;left:477px;top:449px" width="10" height="10" viewBox="0 0 10 10"><path d="M2.2 4.6 L4.1 6.9 L7.9 2.6" fill="none" stroke="#111" stroke-width="1.8"/></svg>
<div class="t" style="left:491px;top:449px;">Add Default Route</div>
<div class="cb" style="left:477px;top:464px"></div>
<svg style="position:absolute;left:477px;top:464px" width="10" height="10" viewBox="0 0 10 10"><path d="M2.2 4.6 L4.1 6.9 L7.9 2.6" fill="none" stroke="#111" stroke-width="1.8"/></svg>
<div class="t" style="left:491px;top:464px;">Use Peer DNS</div>
<div class="tr" style="left:300px;top:481px;width:171px;">Keepalive Timeout:</div>
<div class="inp" style="left:477px;top:480px;width:143px;height:14px"></div>
<div class="t" style="left:480px;top:481px;">30</div>
<svg style="position:absolute;left:623px;top:485px" width="9" height="5" viewBox="0 0 9 5"><path d="M0 5 H9 L4.5 0 Z" fill="#111"/></svg>
<div style="position:absolute;left:399px;top:505px;width:5px;height:1px;background:#c8c8c8"></div>
<div class="t" style="left:406px;top:499px;">Allow</div>
<div style="position:absolute;left:430px;top:505px;width:205px;height:1px;background:#c8c8c8"></div>
<div class="cb" style="left:404px;top:515px"></div>
<svg style="position:absolute;left:404px;top:515px" width="10" height="10" viewBox="0 0 10 10"><path d="M2.2 4.6 L4.1 6.9 L7.9 2.6" fill="none" stroke="#111" stroke-width="1.8"/></svg>
<div class="t" style="left:418px;top:515px;">pap</div>
<div class="cb" style="left:520px;top:515px"></div>
<svg style="position:absolute;left:520px;top:515px" width="10" height="10" viewBox="0 0 10 10"><path d="M2.2 4.6 L4.1 6.9 L7.9 2.6" fill="none" stroke="#111" stroke-width="1.8"/></svg>
<div class="t" style="left:534px;top:515px;">chap</div>
<div class="cb" style="left:404px;top:530px"></div>
<svg style="position:absolute;left:404px;top:530px" width="10" height="10" viewBox="0 0 10 10"><path d="M2.2 4.6 L4.1 6.9 L7.9 2.6" fill="none" stroke="#111" stroke-width="1.8"/></svg>
<div class="t" style="left:418px;top:530px;">mschap1</div>
<div class="cb" style="left:520px;top:530px"></div>
<svg style="position:absolute;left:520px;top:530px" width="10" height="10" viewBox="0 0 10 10"><path d="M2.2 4.6 L4.1 6.9 L7.9 2.6" fill="none" stroke="#111" stroke-width="1.8"/></svg>
<div class="t" style="left:534px;top:530px;">mschap2</div>
<div class="btn" style="left:649px;top:274px;width:79px;height:19px;border:1px solid #202020;"></div>
<div class="tc" style="left:649px;top:277px;width:79px;">OK</div>
<div class="btn" style="left:649px;top:295px;width:79px;height:19px;"></div>
<div class="tc" style="left:649px;top:298px;width:79px;">Cancel</div>
<div class="btn" style="left:649px;top:316px;width:79px;height:19px;"></div>
<div class="tc" style="left:649px;top:319px;width:79px;">Apply</div>
<div class="btn" style="left:649px;top:341px;width:79px;height:19px;"></div>
<div class="tc" style="left:649px;top:344px;width:79px;">Disable</div>
<div class="btn" style="left:649px;top:362px;width:79px;height:19px;"></div>
<div class="tc" style="left:649px;top:365px;width:79px;">Comment</div>
<div class="btn" style="left:649px;top:383px;width:79px;height:19px;"></div>
<div class="tc" style="left:649px;top:386px;width:79px;">Copy</div>
<div class="btn" style="left:649px;top:404px;width:79px;height:19px;"></div>
<div class="tc" style="left:649px;top:407px;width:79px;">Remove</div>
<div class="btn" style="left:649px;top:429px;width:79px;height:19px;"></div>
<div class="tc" style="left:649px;top:432px;width:79px;">Torch</div>
<div class="btn" style="left:649px;top:450px;width:79px;height:19px;"></div>
<div class="tc" style="left:649px;top:453px;width:79px;">Scan...</div>
<div class="btn" style="left:649px;top:471px;width:79px;height:19px;"></div>
<div class="tc" style="left:649px;top:474px;width:79px;">Info...</div>
<div class="btn" style="left:649px;top:492px;width:79px;height:19px;"></div>
<div class="tc" style="left:649px;top:495px;width:79px;">Simple Mode</div>
<div style="position:absolute;left:393px;top:592px;width:79px;height:16px;border-left:1px solid #c0c0c0;border-top:1px solid #c0c0c0;border-right:1px solid #fff;border-bottom:1px solid #fff"></div>
<div class="t" style="left:395px;top:594px;color:#000;">enabled</div>
<div style="position:absolute;left:473px;top:592px;width:80px;height:16px;border-left:1px solid #c0c0c0;border-top:1px solid #c0c0c0;border-right:1px solid #fff;border-bottom:1px solid #fff"></div>
<div class="t" style="left:475px;top:594px;color:#000;">running</div>
<div style="position:absolute;left:554px;top:592px;width:80px;height:16px;border-left:1px solid #c0c0c0;border-top:1px solid #c0c0c0;border-right:1px solid #fff;border-bottom:1px solid #fff"></div>
<div class="t" style="left:556px;top:594px;color:#a8a8a8;">slave</div>
<div style="position:absolute;left:635px;top:592px;width:97px;height:16px;border-left:1px solid #c0c0c0;border-top:1px solid #c0c0c0;border-right:1px solid #fff;border-bottom:1px solid #fff"></div>
<div class="t" style="left:637px;top:594px;color:#000;">Status: waiting for pac...</div>
</body></html>
